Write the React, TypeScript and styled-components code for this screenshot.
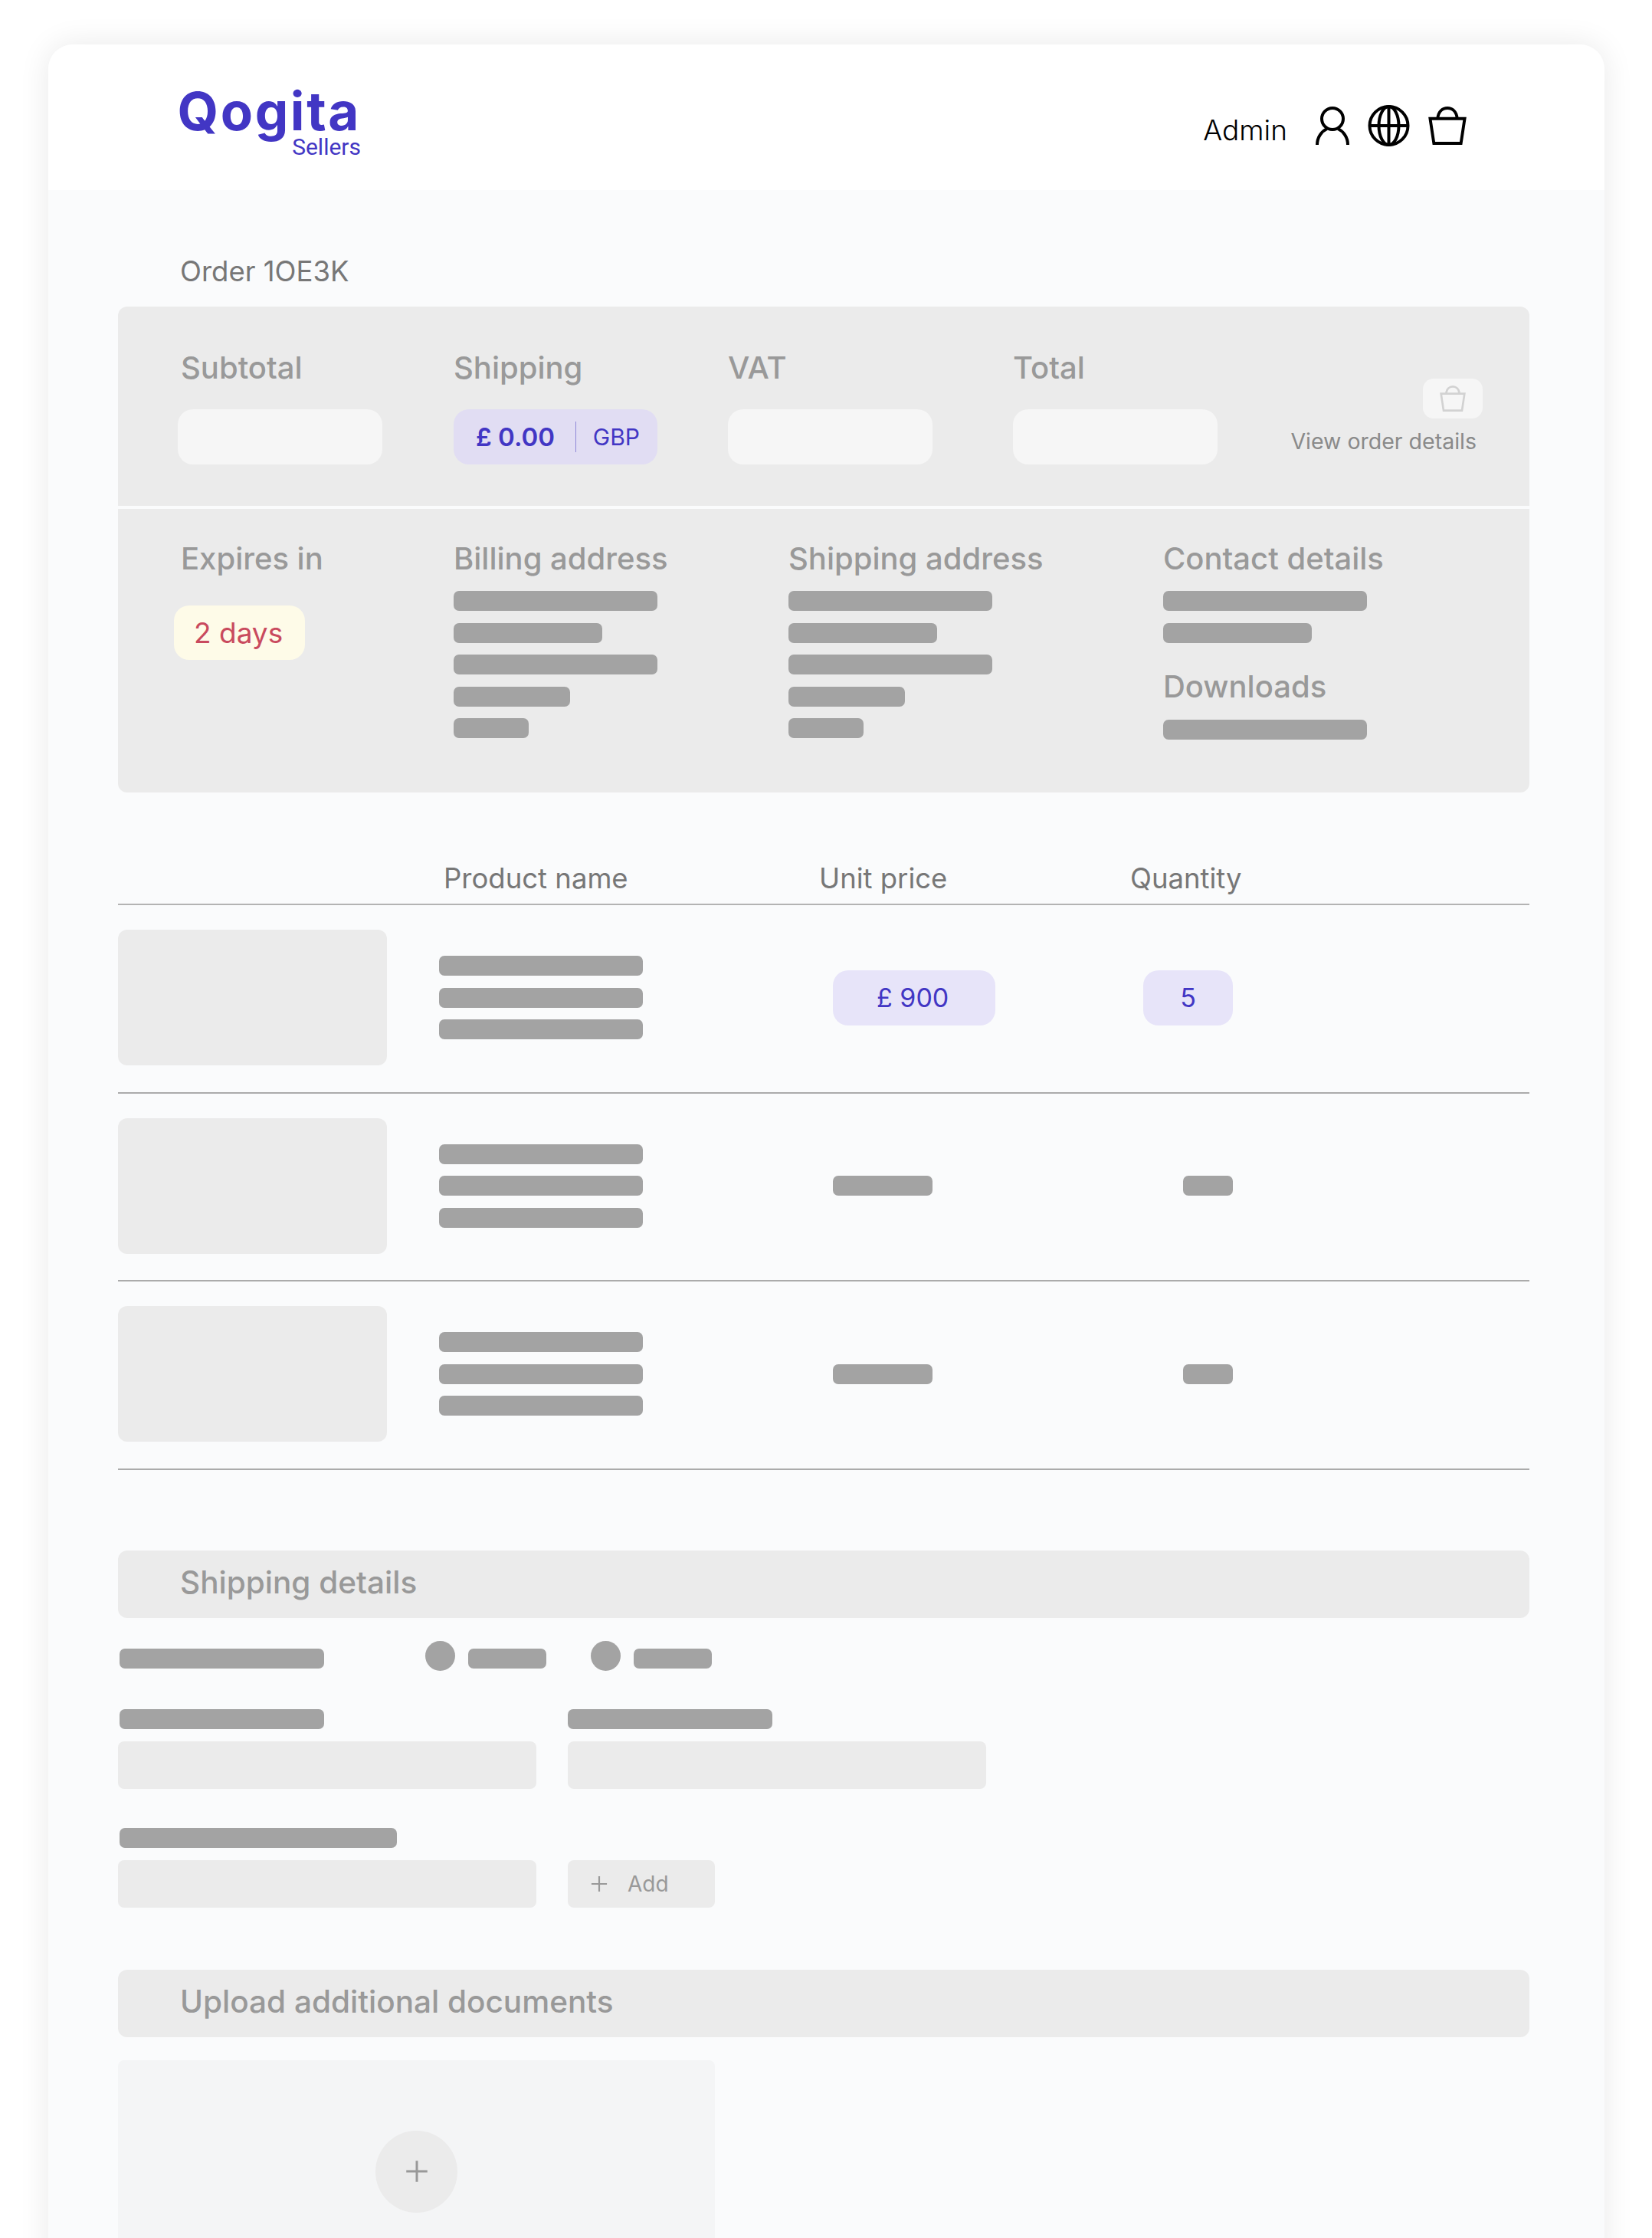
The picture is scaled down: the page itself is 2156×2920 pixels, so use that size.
import styled, { createGlobalStyle } from 'styled-components';

const GlobalStyle = createGlobalStyle`
  html, body {
    margin: 0;
    padding: 0;
    background: #ffffff;
  }
  body {
    font-family: Inter, 'Liberation Sans', sans-serif;
  }
`;

const UserIcon = () => (
  <svg width="44" height="50" viewBox="0 0 44 50" fill="none" stroke="#000" strokeWidth="4">
    <circle cx="22" cy="16" r="14" />
    <path d="M2 50C2 40 8 32 15 29M42 50C42 40 36 32 29 29" />
  </svg>
);

const GlobeIcon = () => (
  <svg width="55" height="54" viewBox="0 0 55 54" fill="none" stroke="#000" strokeWidth="4">
    <circle cx="27.5" cy="27" r="25" />
    <ellipse cx="27.5" cy="27" rx="13" ry="25" />
    <path d="M27.5 2V52M2.5 27H52.5" />
  </svg>
);

const BagIcon = ({ size = 50, color = '#000' }: { size?: number; color?: string }) => (
  <svg width={size} height={size} viewBox="0 0 50 51" fill="none" stroke={color} strokeWidth="4">
    <path d="M2 16H48L43 49H7Z" />
    <path d="M12 16C13 6 19 2 25 2C31 2 37 6 38 16" />
  </svg>
);

const PlusIcon = ({ size }: { size: number }) => (
  <svg width={size} height={size} viewBox="0 0 24 24" fill="none" stroke="#999" strokeWidth="2.4">
    <path d="M12 1V23M1 12H23" />
  </svg>
);

const addressBars = [266, 194, 266, 152, 98];
const products = [
  { id: 1, filled: true },
  { id: 2, filled: false },
  { id: 3, filled: false },
];

export default function App() {
  return (
    <>
      <GlobalStyle />
      <Page>
        <Card>
          <Header>
            <Logo>
              <LogoName>Qogita</LogoName>
              <LogoSub>Sellers</LogoSub>
            </Logo>
            <HeaderActions>
              <AdminLabel>Admin</AdminLabel>
              <UserIcon />
              <GlobeIcon />
              <BagIcon />
            </HeaderActions>
          </Header>

          <Content>
            <OrderTitle>Order 1OE3K</OrderTitle>

            <Summary>
              <Totals>
                <div>
                  <SummaryLabel>Subtotal</SummaryLabel>
                  <ValueBox $shift={-4} />
                </div>
                <div>
                  <SummaryLabel>Shipping</SummaryLabel>
                  <ShippingBox>
                    <Amount>£ 0.00</Amount>
                    <Currency>GBP</Currency>
                  </ShippingBox>
                </div>
                <div>
                  <SummaryLabel>VAT</SummaryLabel>
                  <ValueBox />
                </div>
                <div>
                  <SummaryLabel>Total</SummaryLabel>
                  <ValueBox />
                </div>
                <OrderLink>
                  <BagButton>
                    <BagIcon size={34} color="#d2d2d2" />
                  </BagButton>
                  <OrderLinkText>View order details</OrderLinkText>
                </OrderLink>
              </Totals>

              <Details>
                <div>
                  <SummaryLabel>Expires in</SummaryLabel>
                  <ExpiryPill>2 days</ExpiryPill>
                </div>
                <div>
                  <SummaryLabel>Billing address</SummaryLabel>
                  <BarStack>
                    {addressBars.map((w, i) => (
                      <Bar key={i} $w={w} />
                    ))}
                  </BarStack>
                </div>
                <div>
                  <SummaryLabel>Shipping address</SummaryLabel>
                  <BarStack>
                    {addressBars.map((w, i) => (
                      <Bar key={i} $w={w} />
                    ))}
                  </BarStack>
                </div>
                <div>
                  <SummaryLabel>Contact details</SummaryLabel>
                  <BarStack>
                    <Bar $w={266} />
                    <Bar $w={194} />
                  </BarStack>
                  <DownloadsLabel>Downloads</DownloadsLabel>
                  <Bar $w={266} />
                </div>
              </Details>
            </Summary>

            <TableHead>
              <span />
              <HeadCell>Product name</HeadCell>
              <HeadCell>Unit price</HeadCell>
              <HeadCell>Quantity</HeadCell>
            </TableHead>

            {products.map((p) => (
              <ProductRow key={p.id}>
                <Thumb />
                <BarStack>
                  <Bar $w={266} />
                  <Bar $w={266} />
                  <Bar $w={266} />
                </BarStack>
                <PriceCell>
                  {p.filled ? <PricePill>£ 900</PricePill> : <Bar $w={130} />}
                </PriceCell>
                <QtyCell>
                  {p.filled ? <QtyPill>5</QtyPill> : <Bar $w={65} />}
                </QtyCell>
              </ProductRow>
            ))}

            <ShippingSection>Shipping details</ShippingSection>

            <RadioRow>
              <Bar $w={267} />
              <RadioGroup>
                <RadioOption>
                  <RadioDot />
                  <Bar $w={102} />
                </RadioOption>
                <RadioOption>
                  <RadioDot />
                  <Bar $w={102} />
                </RadioOption>
              </RadioGroup>
            </RadioRow>

            <FieldRow>
              <Field>
                <Bar $w={267} />
                <FieldInput />
              </Field>
              <Field>
                <Bar $w={267} />
                <FieldInput />
              </Field>
            </FieldRow>

            <FieldRow $top={51}>
              <Field>
                <Bar $w={362} />
                <FieldInput />
              </Field>
              <AddButton>
                <PlusIcon size={22} />
                Add
              </AddButton>
            </FieldRow>

            <UploadSection>Upload additional documents</UploadSection>

            <UploadBox>
              <UploadCircle>
                <PlusIcon size={30} />
              </UploadCircle>
            </UploadBox>
          </Content>
        </Card>
      </Page>
    </>
  );
}

const Page = styled.div`
  height: 2920px;
  overflow: hidden;
  padding: 58px 63px 0;
  box-sizing: border-box;
  background: #ffffff;
`;

const Card = styled.div`
  width: 2031px;
  height: 2900px;
  border-radius: 32px 32px 0 0;
  background: #fafbfc;
  box-shadow: 0 0 40px rgba(0, 0, 0, 0.09);
`;

const Header = styled.header`
  height: 190px;
  box-sizing: border-box;
  padding: 57px 180px 0 170px;
  display: flex;
  justify-content: space-between;
  align-items: flex-start;
  background: #ffffff;
  border-radius: 32px 32px 0 0;
`;

const Logo = styled.div`
  display: flex;
  flex-direction: column;
  align-items: flex-end;
  width: 238px;
  color: #4236c4;
`;

const LogoName = styled.div`
  font-size: 69px;
  line-height: 60px;
  font-weight: 700;
  letter-spacing: 2.6px;
  white-space: nowrap;
`;

const LogoSub = styled.div`
  margin-top: 1px;
  font-family: Roboto, sans-serif;
  font-size: 30px;
  line-height: 32px;
`;

const HeaderActions = styled.div`
  display: flex;
  align-items: center;
  gap: 24px;
  padding-top: 21px;
`;

const AdminLabel = styled.span`
  margin: 12px 13px 0 0;
  font-size: 37px;
  font-weight: 300;
  line-height: 44px;
  color: #000000;
`;

const Content = styled.main`
  padding: 0 98px 0 91px;
`;

const OrderTitle = styled.h1`
  margin: 0;
  padding: 84px 0 0 81px;
  font-size: 36.5px;
  line-height: 44px;
  font-weight: 400;
  color: #777777;
`;

const Summary = styled.section`
  margin-top: 24px;
  border-radius: 12px;
  background: #ebebeb;
`;

const Totals = styled.div`
  height: 264px;
  box-sizing: border-box;
  padding: 56px 0 0 82px;
  display: grid;
  grid-template-columns: 356px 358px 372px 362px 1fr;
  border-bottom: 4px solid #fafbfc;
`;

const Details = styled.div`
  height: 370px;
  box-sizing: border-box;
  padding: 41px 0 0 82px;
  display: grid;
  grid-template-columns: 356px 437px 489px 1fr;
`;

const SummaryLabel = styled.div`
  font-size: 40px;
  line-height: 48px;
  font-weight: 500;
  color: #999999;
`;

const ValueBox = styled.div<{ $shift?: number }>`
  margin: 30px 0 0 ${(props) => props.$shift ?? 0}px;
  width: 267px;
  height: 72px;
  border-radius: 20px;
  background: #f6f6f6;
`;

const ShippingBox = styled.div`
  margin-top: 30px;
  width: 266px;
  height: 72px;
  box-sizing: border-box;
  padding: 0 23px 0 29px;
  display: flex;
  align-items: center;
  justify-content: space-between;
  border-radius: 20px;
  background: #e1ddf3;
  color: #4236c4;
`;

const Amount = styled.span`
  width: 130px;
  font-size: 33px;
  font-weight: 600;
  border-right: 1px solid #8f88d8;
  line-height: 40px;
`;

const Currency = styled.span`
  font-size: 30px;
  line-height: 40px;
`;

const OrderLink = styled.div`
  margin-top: 38px;
  display: flex;
  flex-direction: column;
  align-items: flex-end;
  padding-right: 69px;
`;

const BagButton = styled.div`
  width: 78px;
  height: 52px;
  display: flex;
  align-items: center;
  justify-content: center;
  border-radius: 14px;
  background: #f6f6f6;
  margin-right: -8px;
`;

const OrderLinkText = styled.span`
  margin-top: 12px;
  font-size: 28.5px;
  line-height: 36px;
  white-space: nowrap;
  color: #8a8a8a;
`;

const ExpiryPill = styled.div`
  margin: 37px 0 0 -9px;
  width: 171px;
  height: 71px;
  box-sizing: border-box;
  padding-left: 26px;
  display: flex;
  align-items: center;
  border-radius: 20px;
  background: #fefbe8;
  font-size: 37px;
  color: #c94a5e;
`;

const BarStack = styled.div`
  margin-top: 18px;
  display: flex;
  flex-direction: column;
  gap: 15.6px;
`;

const Bar = styled.div<{ $w: number }>`
  width: ${(props) => props.$w}px;
  height: 26px;
  border-radius: 7px;
  background: #a3a3a3;
`;

const DownloadsLabel = styled(SummaryLabel)`
  margin: 33px 0 19px;
`;

const TableHead = styled.div`
  margin-top: 90px;
  height: 55px;
  display: grid;
  grid-template-columns: 425px 490px 406px 1fr;
  border-bottom: 2px solid #b3b3b3;
`;

const HeadCell = styled.div`
  font-size: 36.5px;
  line-height: 44px;
  color: #777777;
`;

const ProductRow = styled.div`
  height: 245.67px;
  box-sizing: border-box;
  padding-top: 32px;
  display: grid;
  grid-template-columns: 419px 514px 405px 117px;
  grid-template-rows: 177px;
  align-items: center;
  border-bottom: 2px solid #ababab;

  ${BarStack} {
    margin-top: 0;
  }
`;

const Thumb = styled.div`
  width: 351px;
  height: 177px;
  border-radius: 12px;
  background: #ebebeb;
`;

const PriceCell = styled.div`
  display: flex;
`;

const QtyCell = styled.div`
  display: flex;
  justify-content: flex-end;
`;

const PricePill = styled.div`
  width: 212px;
  height: 72px;
  box-sizing: border-box;
  padding-left: 57px;
  display: flex;
  align-items: center;
  border-radius: 20px;
  background: #e7e4f9;
  font-size: 34px;
  color: #4236c4;
`;

const QtyPill = styled.div`
  width: 117px;
  height: 72px;
  display: flex;
  align-items: center;
  justify-content: center;
  border-radius: 20px;
  background: #e7e4f9;
  font-size: 34px;
  color: #4236c4;
`;

const SectionBar = styled.h2`
  margin: 0;
  height: 88px;
  box-sizing: border-box;
  padding: 0 0 4px 81px;
  display: flex;
  align-items: center;
  border-radius: 12px;
  background: #ebebeb;
  font-size: 40.5px;
  font-weight: 500;
  color: #999999;
`;

const ShippingSection = styled(SectionBar)`
  margin-top: 105px;
`;

const UploadSection = styled(SectionBar)`
  margin-top: 81px;
`;

const RadioRow = styled.div`
  margin: 27px 0 0 2px;
  height: 39px;
  display: flex;
  align-items: flex-end;
  padding-bottom: 3px;
`;

const RadioGroup = styled.div`
  margin-left: 132px;
  display: flex;
  gap: 58px;
`;

const RadioOption = styled.div`
  display: flex;
  align-items: flex-end;
  gap: 17px;
`;

const RadioDot = styled.div`
  width: 39px;
  height: 39px;
  margin-bottom: -3px;
  border-radius: 50%;
  background: #a3a3a3;
`;

const FieldRow = styled.div<{ $top?: number }>`
  margin-top: ${(props) => props.$top ?? 50}px;
  display: flex;
  align-items: flex-end;
  gap: 41px;
`;

const Field = styled.div`
  display: flex;
  flex-direction: column;
  gap: 16px;

  &:first-child ${Bar} {
    margin-left: 2px;
  }
`;

const FieldInput = styled.div`
  width: 546px;
  height: 62px;
  border-radius: 8px;
  background: #ebebeb;
`;

const AddButton = styled.div`
  width: 192px;
  height: 62px;
  box-sizing: border-box;
  padding-left: 30px;
  display: flex;
  align-items: center;
  gap: 26px;
  border-radius: 8px;
  background: #ebebeb;
  font-size: 28px;
  color: #999999;
`;

const UploadBox = styled.div`
  margin-top: 30px;
  width: 779px;
  height: 300px;
  padding-top: 92px;
  box-sizing: border-box;
  display: flex;
  justify-content: center;
  align-items: flex-start;
  border-radius: 8px 8px 0 0;
  background: #f4f5f6;
`;

const UploadCircle = styled.div`
  width: 107px;
  height: 107px;
  display: flex;
  align-items: center;
  justify-content: center;
  border-radius: 50%;
  background: #ebebeb;
`;
